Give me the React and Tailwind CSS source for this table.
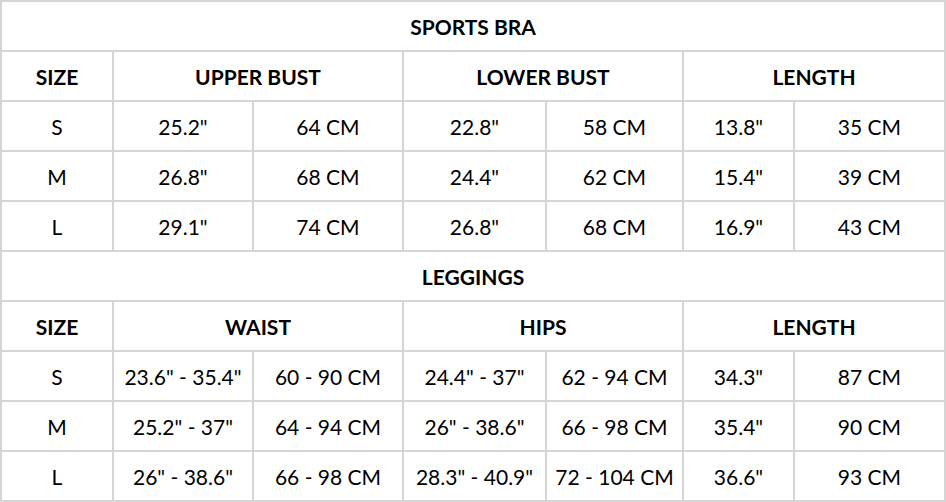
const braRows = [
  ["S", '25.2"', "64 CM", '22.8"', "58 CM", '13.8"', "35 CM"],
  ["M", '26.8"', "68 CM", '24.4"', "62 CM", '15.4"', "39 CM"],
  ["L", '29.1"', "74 CM", '26.8"', "68 CM", '16.9"', "43 CM"],
];

const leggingRows = [
  ["S", '23.6" - 35.4"', "60 - 90 CM", '24.4" - 37"', "62 - 94 CM", '34.3"', "87 CM"],
  ["M", '25.2" - 37"', "64 - 94 CM", '26" - 38.6"', "66 - 98 CM", '35.4"', "90 CM"],
  ["L", '26" - 38.6"', "66 - 98 CM", '28.3" - 40.9"', "72 - 104 CM", '36.6"', "93 CM"],
];

const Cell = ({ children, className = "" }) => (
  <div className={`bg-white h-[48px] flex items-center justify-center whitespace-nowrap ${className}`}>
    {children}
  </div>
);

const Section = ({ title, groups, rows }) => (
  <>
    <Cell className="col-span-7 font-bold">{title}</Cell>
    <Cell className="font-bold">SIZE</Cell>
    {groups.map((g) => (
      <Cell key={g} className="col-span-2 font-bold">{g}</Cell>
    ))}
    {rows.map((r) =>
      r.map((v, i) => <Cell key={r[0] + i}>{v}</Cell>)
    )}
  </>
);

export default function App() {
  return (
    <div className="w-[946px] h-[502px] bg-white">
      <div
        className="grid grid-cols-[110px_138px_148px_141px_135px_109px_149px] gap-[2px] p-[2px] bg-[#d5d5d5] text-[21px] text-black leading-none"
        style={{ fontFamily: "Lato, 'Open Sans', sans-serif" }}
      >
        <Section title="SPORTS BRA" groups={["UPPER BUST", "LOWER BUST", "LENGTH"]} rows={braRows} />
        <Section title="LEGGINGS" groups={["WAIST", "HIPS", "LENGTH"]} rows={leggingRows} />
      </div>
    </div>
  );
}
